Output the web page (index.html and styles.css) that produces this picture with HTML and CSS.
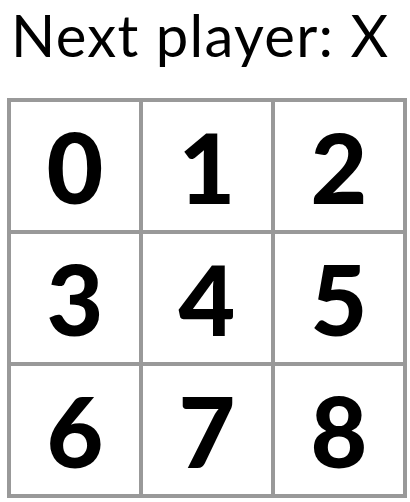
FILE: index.html
```
<!DOCTYPE html>
<html lang="en">
<head>
    <meta charset="UTF-8">
    <title>Tic-Tac-Toe</title>
    <link rel="stylesheet" href="styles.css">
</head>
<body>
    <div class="game">
        <div class="status">Next player: X</div>
        <div class="board">
            <div class="board-row">
                <button class="square">0</button>
                <button class="square">1</button>
                <button class="square">2</button>
            </div>
            <div class="board-row">
                <button class="square">3</button>
                <button class="square">4</button>
                <button class="square">5</button>
            </div>
            <div class="board-row">
                <button class="square">6</button>
                <button class="square">7</button>
                <button class="square">8</button>
            </div>
        </div>
    </div>
</body>
</html>
```

FILE: styles.css
```
* { box-sizing: border-box; }
body {
    margin: 0;
    padding: 0 7px;
    font-family: "Century Gothic", Futura, Lato, sans-serif;
    background: #fff;
}
.status {
    font-size: 58px;
    line-height: 70px;
    letter-spacing: 1.3px;
    color: #000;
    margin-bottom: 28px;
    padding-left: 4px;
}
.board-row { display: flex; }
.board-row + .board-row { margin-top: -4px; }
.square {
    width: 136px;
    height: 136px;
    margin: 0 -4px 0 0;
    padding: 0;
    background: #fff;
    border: 4px solid #999;
    font-family: inherit;
    font-size: 98px;
    font-weight: 900;
    line-height: 128px;
    color: #000;
    text-align: center;
}
```
